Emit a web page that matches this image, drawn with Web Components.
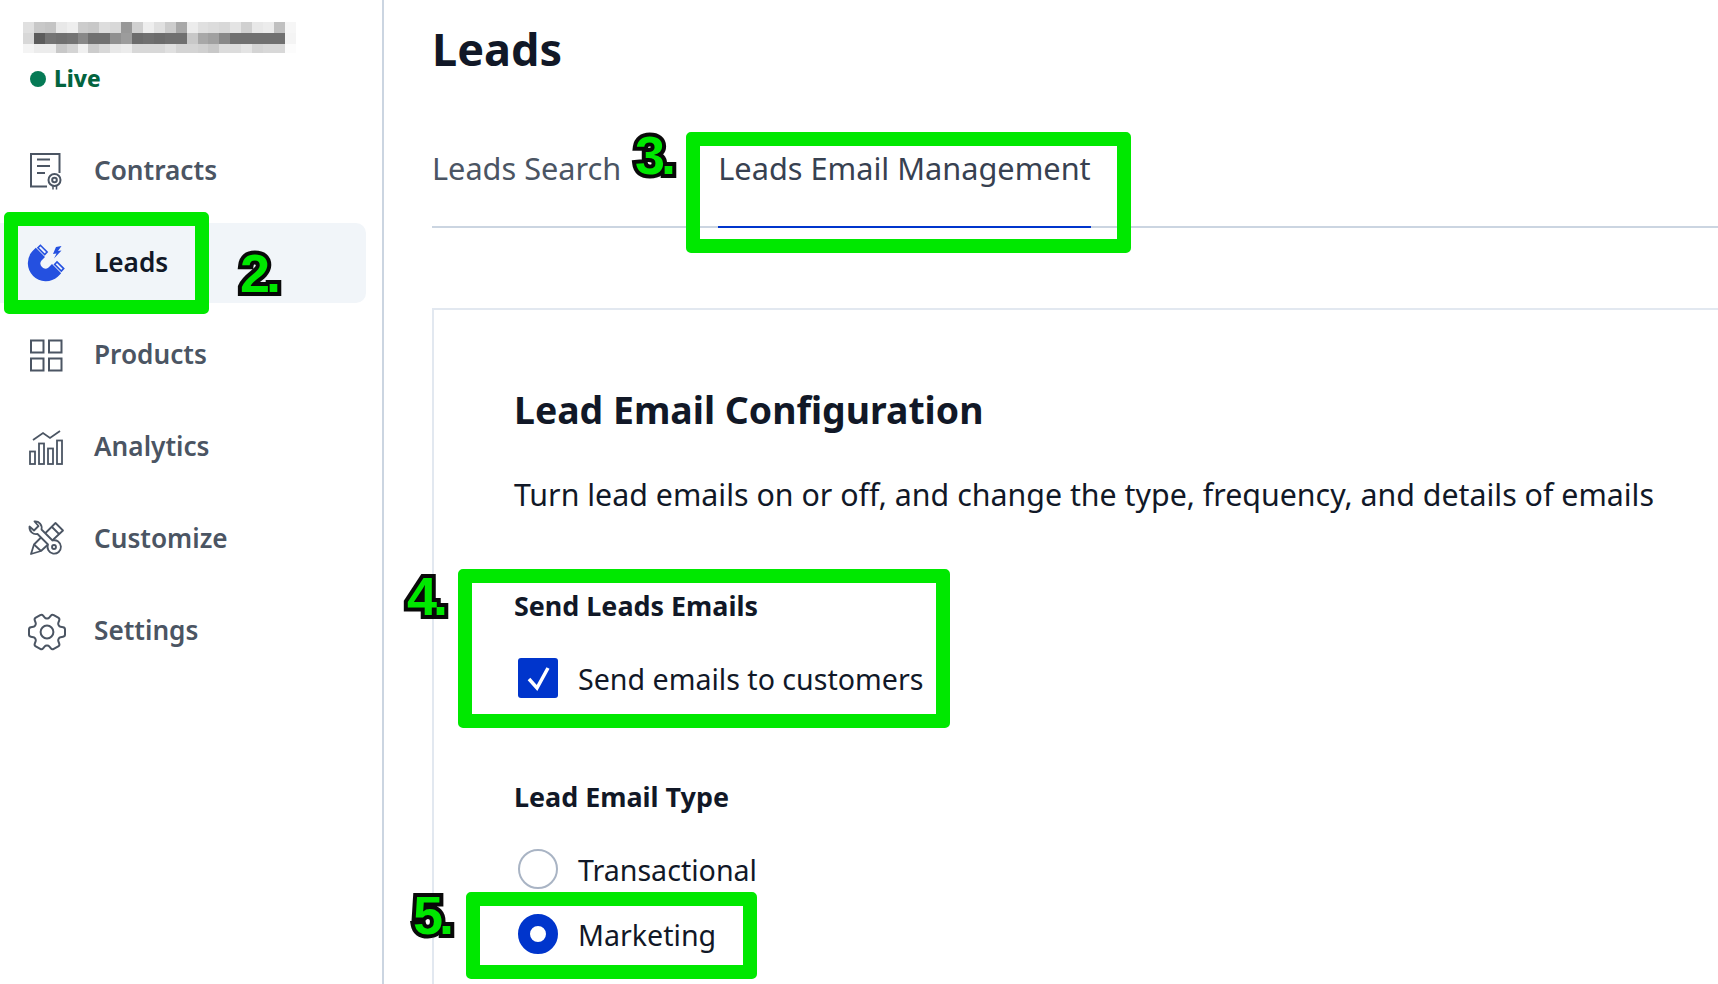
<!DOCTYPE html>
<html lang="en">
<head>
<meta charset="utf-8">
<title>Leads</title>
<style>
  html, body { margin: 0; height: 100%; background: #fff; overflow: hidden; }
  body { font-family: "Noto Sans", "Open Sans", sans-serif; }
</style>
</head>
<body>

<app-shell>
  <side-bar slot="side">
    <nav-item label="Contracts" icon="contracts"></nav-item>
    <nav-item label="Leads" icon="leads" active></nav-item>
    <nav-item label="Products" icon="products"></nav-item>
    <nav-item label="Analytics" icon="analytics"></nav-item>
    <nav-item label="Customize" icon="customize"></nav-item>
    <nav-item label="Settings" icon="settings"></nav-item>
  </side-bar>
  <leads-page>
    <tab-strip>
      <tab-link>Leads Search</tab-link>
      <tab-link active>Leads Email Management</tab-link>
    </tab-strip>
    <config-card>
      <field-group label="Send Leads Emails">
        <check-row kind="check" on>Send emails to customers</check-row>
      </field-group>
      <field-group label="Lead Email Type" class="type">
        <check-row kind="radio">Transactional</check-row>
        <check-row kind="radio" on>Marketing</check-row>
      </field-group>
    </config-card>
  </leads-page>
</app-shell>

<note-box style="left:4px;top:212px;width:205px;height:102px"></note-box>
<note-box style="left:686px;top:132px;width:445px;height:121px"></note-box>
<note-box style="left:458px;top:569px;width:492px;height:159px"></note-box>
<note-box style="left:466px;top:892px;width:291px;height:87px"></note-box>
<note-num style="left:240px;top:243px">2.</note-num>
<note-num style="left:635px;top:125px">3.</note-num>
<note-num style="left:407px;top:566px">4.</note-num>
<note-num style="left:413px;top:885px">5.</note-num>

<script>
// sidebar icons, all on a 40 box
const ICONS = {
  contracts: `<g fill="none" stroke="#4b5563" stroke-width="2">
    <path d="M21 35.5H5V3h28.500v19"/><path d="M11 8.500h13M11 15h13M11 22h8"/>
    <circle cx="28.500" cy="29" r="6"/><circle cx="28.500" cy="29" r="2.300"/><path d="M27 35v3.500M30.500 35v3.500" stroke-width="1.500"/></g>`,
  leads: `<path fill="#2450e0" d="M9.800 4.800L6.300 8.300A18 18 0 0 0 31.700 33.700L35.200 30.200L26 21L22.500 24.500A5 5 0 0 1 15.500 17.500L19 14Z"/>
    <g fill="#eef2fb" stroke="#2450e0" stroke-width="1.600"><path d="M11.900 4.700L18.700 11.500L21.100 9L14.400 2.300Z"/><path d="M28.600 21.400L35.300 28.100L37.700 25.600L31 18.900Z"/></g>
    <path fill="#2450e0" d="M30 4L27 11L30.500 10.500L28 15.500L35.500 7.500L32 8L35.500 3Z"/>`,
  products: `<g fill="none" stroke="#4b5563" stroke-width="2"><rect x="5" y="5.500" width="12.500" height="12"/><rect x="23" y="5.500" width="12.500" height="12"/><rect x="5" y="23.500" width="12.500" height="12"/><rect x="23" y="23.500" width="12.500" height="12"/></g>`,
  analytics: `<g fill="none" stroke="#4b5563" stroke-width="1.800"><rect x="4" y="24.500" width="5" height="12.500"/><rect x="13" y="16.500" width="5" height="20.500"/><rect x="22" y="21.500" width="5" height="15.500"/><rect x="31" y="13.500" width="5" height="23.500"/><path d="M7 13L17 6L24 11L34 4"/></g>`,
  customize: `<g fill="#fff" stroke="#4b5563" stroke-width="1.800" stroke-linejoin="round">
    <path d="M5 35L8 25.500L29.500 4L37 11.500L15 32Z"/><path d="M26 8L33 15M8 25.500L15 32"/>
    <path d="M26.500 21.500L15.500 10.500C16.500 6 13 2 8.500 2.500L12.500 7L8 11.500L3.500 7.500C3 12 7 16 11.500 15L22 25.500A6.700 6.700 0 1 0 26.500 21.500Z"/>
    <circle cx="28" cy="28" r="2"/></g>`,
  settings: `<svg x="1" y="1" width="38" height="38" viewBox="2 2 20 20"><g transform="rotate(90 12 12)" fill="none" stroke="#4b5563" stroke-width="1"><path d="M9.594 3.940c.09-.542.56-.94 1.110-.94h2.593c.55 0 1.020.398 1.110.94l.213 1.281c.063.374.313.686.645.870.074.040.147.083.22.127.325.196.72.257 1.075.124l1.217-.456a1.125 1.125 0 0 1 1.370.49l1.296 2.247a1.125 1.125 0 0 1-.26 1.431l-1.003.827c-.293.241-.438.613-.43.992a7.723 7.723 0 0 1 0 .255c-.008.378.137.75.43.991l1.004.827c.424.35.534.955.26 1.430l-1.298 2.247a1.125 1.125 0 0 1-1.369.491l-1.217-.456c-.355-.133-.75-.072-1.076.124a6.470 6.470 0 0 1-.22.128c-.331.183-.581.495-.644.869l-.213 1.281c-.09.543-.56.94-1.110.94h-2.594c-.55 0-1.019-.398-1.110-.94l-.213-1.281c-.062-.374-.312-.686-.644-.87a6.520 6.520 0 0 1-.22-.127c-.325-.196-.72-.257-1.076-.124l-1.217.456a1.125 1.125 0 0 1-1.369-.49l-1.297-2.247a1.125 1.125 0 0 1 .26-1.431l1.004-.827c.292-.24.437-.613.43-.991a6.932 6.932 0 0 1 0-.255c.007-.38-.138-.751-.43-.992l-1.004-.827a1.125 1.125 0 0 1-.26-1.430l1.297-2.247a1.125 1.125 0 0 1 1.370-.491l1.216.456c.356.133.751.072 1.076-.124.072-.044.146-.086.22-.128.332-.183.582-.495.644-.869l.214-1.280Z"/><circle cx="12" cy="12" r="3.200"/></g></svg>`
};

// the blurred account name, one grey per block
const NAME_ROWS = [
  'e0 c8 c4 e8 ee cc c8 dd d8 98 d0 ee e0 cc a8 ec e0 dc d8 e4 d0 e8 ec c0 f6',
  'd8 5c 74 70 74 88 70 70 90 9c 6c 70 6c 70 70 c8 a8 a0 88 70 70 70 70 70 f4',
  'f4 ec ec c8 d4 f0 cc d8 e8 ec d8 d8 d8 e0 d4 d4 d0 c8 dc dc e4 d4 d8 d8 fc'
];

class AppShell extends HTMLElement {
  constructor() {
    super();
    this.attachShadow({ mode: 'open' }).innerHTML = `
      <style>
        :host { display: flex; height: 984px; width: 1718px; overflow: hidden; }
      </style>
      <slot name="side"></slot>
      <slot></slot>
    `;
  }
}

class PixelName extends HTMLElement {
  constructor() {
    super();
    const cells = NAME_ROWS.map(r => r.split(' ').map(c => `<i style="background:#${c}${c.slice(0,2)}${c}"></i>`).join('')).join('');
    this.attachShadow({ mode: 'open' }).innerHTML = `
      <style>
        :host { display: grid; grid-template-columns: repeat(25, 10.92px); grid-template-rows: 11px 11px 9px; width: 273px; }
        i { display: block; }
      </style>${cells}
    `;
  }
}

class SideBar extends HTMLElement {
  constructor() {
    super();
    this.attachShadow({ mode: 'open' }).innerHTML = `
      <style>
        :host { display: block; box-sizing: border-box; width: 384px; flex: none; height: 100%; border-right: 2px solid #cbd5e1; padding-top: 22px; }
        pixel-name { margin-left: 23px; }
        .live { display: flex; align-items: center; gap: 8px; margin: 12px 0 38px 30px; height: 28px; font-size: 22.5px; font-weight: 800; color: #03643f; }
        .live span:last-child { margin-bottom: 2px; }
        .dot { width: 16px; height: 16px; border-radius: 50%; background: #057a55; }
        nav { display: flex; flex-direction: column; gap: 12px; width: 366px; }
      </style>
      <pixel-name></pixel-name>
      <div class="live"><span class="dot"></span><span>Live</span></div>
      <nav><slot></slot></nav>
    `;
  }
}

class NavItem extends HTMLElement {
  constructor() {
    super();
    this.attachShadow({ mode: 'open' }).innerHTML = `
      <style>
        :host { display: flex; align-items: center; gap: 28px; height: 80px; padding-left: 26px; border-radius: 0 10px 10px 0; font-size: 26.2px; font-weight: 600; color: #4b5563; }
        :host([active]) { background: #f1f5f9; color: #111827; }
        svg { width: 40px; height: 40px; flex: none; display: block; overflow: visible; }
        span { margin-bottom: 3px; }
      </style>
      <svg viewBox="0 0 40 40">${ICONS[this.getAttribute('icon')]}</svg>
      <span>${this.getAttribute('label')}</span>
    `;
  }
}

class LeadsPage extends HTMLElement {
  constructor() {
    super();
    this.attachShadow({ mode: 'open' }).innerHTML = `
      <style>
        :host { display: block; flex: 1; min-width: 0; padding-left: 48px; }
        h1 { margin: 0; height: 98px; line-height: 98px; font-size: 45px; font-weight: 700; color: #111827; }
      </style>
      <h1>Leads</h1>
      <slot></slot>
    `;
  }
}

class TabStrip extends HTMLElement {
  constructor() {
    super();
    this.attachShadow({ mode: 'open' }).innerHTML = `
      <style>
        :host { display: flex; gap: 97px; height: 130px; box-sizing: border-box; border-bottom: 2px solid #cbd5e1; margin-bottom: 80px; }
      </style>
      <slot></slot>
    `;
  }
}

class TabLink extends HTMLElement {
  constructor() {
    super();
    this.attachShadow({ mode: 'open' }).innerHTML = `
      <style>
        :host { display: block; box-sizing: border-box; height: 130px; padding-top: 49px; font-size: 30.7px; line-height: 42px; color: #4b5563; white-space: nowrap; }
        :host([active]) { border-bottom: 2px solid #0035cc; color: #374151; }
      </style>
      <slot></slot>
    `;
  }
}

class ConfigCard extends HTMLElement {
  constructor() {
    super();
    this.attachShadow({ mode: 'open' }).innerHTML = `
      <style>
        :host { display: block; border: 2px solid #e2e8f0; border-width: 2px 0 0 2px; padding: 70px 0 0 80px; height: 700px; color: #111827; }
        h2 { margin: 0; font-size: 37.4px; line-height: 60px; font-weight: 700; }
        p { margin: 32px 0 70px; font-size: 30.35px; line-height: 46px; white-space: nowrap; color: #111827; }
      </style>
      <h2>Lead Email Configuration</h2>
      <p>Turn lead emails on or off, and change the type, frequency, and details of emails</p>
      <slot></slot>
    `;
  }
}

class FieldGroup extends HTMLElement {
  constructor() {
    super();
    this.attachShadow({ mode: 'open' }).innerHTML = `
      <style>
        :host { display: block; margin-bottom: 81px; }
        .label { font-size: 26.9px; line-height: 36px; font-weight: 700; color: #111827; margin-bottom: 34px; }
        .rows { display: flex; flex-direction: column; gap: 25px; }
      </style>
      <div class="label">${this.getAttribute('label')}</div>
      <div class="rows"><slot></slot></div>
    `;
  }
}

class CheckRow extends HTMLElement {
  constructor() {
    super();
    const radio = this.getAttribute('kind') === 'radio';
    const on = this.hasAttribute('on');
    let mark = '';
    if (!radio && on) mark = `<svg viewBox="0 0 40 40" width="40" height="40"><path d="M11 21L19 30L30 10" fill="none" stroke="#fff" stroke-width="3.500"/></svg>`;
    this.attachShadow({ mode: 'open' }).innerHTML = `
      <style>
        :host { display: flex; align-items: center; gap: 20px; height: 40px; padding-left: 4px; font-size: 28.6px; color: #111827; white-space: nowrap; }
        .box { width: 40px; height: 40px; flex: none; box-sizing: border-box; display: block; }
        .box svg { display: block; }
        .check { background: #0035cc; border-radius: 3px; }
        .radio { border-radius: 50%; border: 2px solid #a9b4c4; background: #fff; }
        .radio.on { border: 12px solid #0035cc; }
      </style>
      <span class="box ${radio ? 'radio' : 'check'} ${on ? 'on' : ''}">${mark}</span>
      <span><slot></slot></span>
    `;
  }
}

class NoteBox extends HTMLElement {
  constructor() {
    super();
    this.attachShadow({ mode: 'open' }).innerHTML = `
      <style>
        :host { display: block; position: absolute; box-sizing: border-box; border: 14px solid #00e800; border-radius: 5px; }
      </style>
    `;
  }
}

class NoteNum extends HTMLElement {
  constructor() {
    super();
    this.attachShadow({ mode: 'open' }).innerHTML = `
      <style>
        :host { display: block; position: absolute; font-family: "Liberation Sans", sans-serif; font-weight: 700; font-size: 54px; line-height: 60px; letter-spacing: -4px; color: #00e800; -webkit-text-stroke: 8px #0a0a0a; paint-order: stroke fill; text-shadow: 1px 2px 3px rgba(0,0,0,.5); }
      </style>
      <slot></slot>
    `;
  }
}

customElements.define('app-shell', AppShell);
customElements.define('pixel-name', PixelName);
customElements.define('side-bar', SideBar);
customElements.define('nav-item', NavItem);
customElements.define('leads-page', LeadsPage);
customElements.define('tab-strip', TabStrip);
customElements.define('tab-link', TabLink);
customElements.define('config-card', ConfigCard);
customElements.define('field-group', FieldGroup);
customElements.define('check-row', CheckRow);
customElements.define('note-box', NoteBox);
customElements.define('note-num', NoteNum);
</script>
</body>
</html>
